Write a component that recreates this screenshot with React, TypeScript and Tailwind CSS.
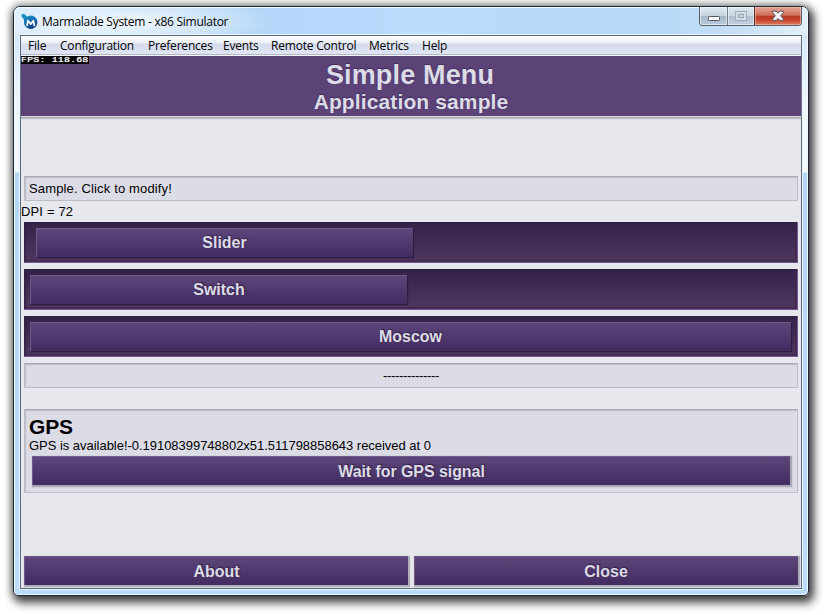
import type { ReactNode } from "react";

const menuItems = [
  { label: "File", width: "w-[32px]" },
  { label: "Configuration", width: "w-[88px]" },
  { label: "Preferences", width: "w-[75px]" },
  { label: "Events", width: "w-[48px]" },
  { label: "Remote Control", width: "w-[98px]" },
  { label: "Metrics", width: "w-[53px]" },
  { label: "Help", width: "w-[40px]" },
];

function Logo() {
  return (
    <svg width="18" height="18" viewBox="0 0 18 18" className="shrink-0">
      <defs>
        <linearGradient id="drop" x1="0" y1="0" x2="0.5" y2="1">
          <stop offset="0" stopColor="#18a9c4" />
          <stop offset="0.5" stopColor="#1679bb" />
          <stop offset="1" stopColor="#123f8c" />
        </linearGradient>
      </defs>
      <path
        d="M0.4 3.2C0.6 1.6 2.8 1.2 4 2.4C4.8 3.3 5.2 4.4 6.6 4.4C8.6 3.3 11.2 3.2 13.2 4.4C15.6 5.8 16.6 8.2 16.3 10.8C15.9 14.4 13.2 17 9.8 16.9C6 16.8 3.1 14.2 3 10.6C3 8.4 3.1 7.2 1.8 6.1C0.9 5.3 0.3 4.3 0.4 3.2Z"
        fill="url(#drop)"
      />
      <path d="M6 14L6.9 8.6L9.7 12.2L12.4 8.6L13.4 14" fill="none" stroke="#fff" strokeWidth="1.7" strokeLinejoin="round" />
    </svg>
  );
}

function WindowControls() {
  return (
    <div className="flex h-[19px] w-[103px] overflow-hidden rounded-b-[4px] border border-t-0 border-[#56626f]">
      <div className="flex w-[28px] items-center justify-center border-r border-[#6d7b8b] bg-[linear-gradient(#dfe9f3_0%,#c6d4e2_48%,#a5b6c9_50%,#b9cbdd_100%)] shadow-[inset_0_0_0_1px_rgba(255,255,255,0.55)]">
        <svg width="14" height="8" viewBox="0 0 14 8" className="mt-[5px] shrink-0">
          <rect x="1.5" y="1.5" width="11" height="4" rx="0.8" fill="#fff" stroke="#535666" />
        </svg>
      </div>
      <div className="flex w-[27px] items-center justify-center border-r border-[#5e2c28] bg-[linear-gradient(#dce7f2_0%,#cbd8e6_48%,#b0c0d1_50%,#c0d0e0_100%)] shadow-[inset_0_0_0_1px_rgba(255,255,255,0.5)]">
        <svg width="14" height="12" viewBox="0 0 14 12" className="shrink-0">
          <rect x="1.5" y="1.5" width="11" height="9" fill="#d4dee9" stroke="#a3acb8" />
          <rect x="4.5" y="4.5" width="5" height="3" fill="#c6d3e1" stroke="#98a3b1" />
        </svg>
      </div>
      <div className="flex flex-1 items-center justify-center bg-[linear-gradient(#e3a596_0%,#d0705c_46%,#b93a22_50%,#c7432a_72%,#dc8063_100%)] shadow-[inset_0_0_0_1px_rgba(255,200,185,0.5)]">
        <svg width="14" height="12" viewBox="0 0 14 12" className="shrink-0">
          <path
            d="M1.6 1.2H5.2L7 3.1L8.8 1.2H12.4V2.6L9.7 5.8L12.4 9V10.4H8.8L7 8.5L5.2 10.4H1.6V9L4.3 5.8L1.6 2.6Z"
            fill="#f5f5f5"
            stroke="#535666"
            strokeLinejoin="round"
          />
        </svg>
      </div>
    </div>
  );
}

const raised =
  "flex h-[29px] items-center justify-center border-l border-t border-[#74568f] bg-[linear-gradient(#5d467a,#412b60)] text-[16px] font-bold text-[#dcdce6] [text-shadow:1px_-1px_1px_#30204a]";

function Track({ children }: { children: ReactNode }) {
  return (
    <div className="mx-[3px] mb-[6px] h-[41px] shrink-0 border-b border-r border-[#755690] bg-[linear-gradient(#332248,#50375f)] pt-[6px] shadow-[inset_-2px_-2px_1px_rgba(60,38,75,0.6),inset_2px_1px_1px_rgba(45,28,65,0.6)]">
      {children}
    </div>
  );
}

const thumbShadow = "shadow-[1px_1px_1px_rgba(35,22,52,0.7)]";
const buttonShadow = "pt-[2px] shadow-[1px_1px_1px_1px_rgba(90,90,95,0.4)]";
const field =
  "mx-[3px] shrink-0 border border-[#bdbdc7] border-t-[#a9a9b3] bg-[#dcdce6] shadow-[inset_1px_1px_1px_#bcbcc6]";

export default function App() {
  return (
    <div className="h-[615px] w-[827px] overflow-hidden bg-white pl-[13px] pt-[6px] font-['Liberation_Sans',sans-serif]">
      <div className="flex h-[590px] w-[796px] flex-col rounded-t-[7px] rounded-b-[5px] border border-[#202a36] bg-[linear-gradient(#e3f0fc_0px,#d4e8fb_30px,#eef6fd_90px,#f4f9fe_165px,#b4d6f7_166px,#b9dcfd_100%)] px-[6px] shadow-[inset_0_0_0_1px_#f0f8ff,0_0_9px_1px_rgba(0,0,0,0.45),3px_5px_10px_2px_rgba(0,0,0,0.65)]">
        <div className="-mx-[6px] flex h-[28px] shrink-0 justify-between rounded-t-[6px] bg-[radial-gradient(ellipse_150px_24px_at_115px_15px,rgba(255,255,255,0.75),rgba(255,255,255,0)),linear-gradient(90deg,#dcecfb_0,#c3dff8_120px,#b4d6f8_250px,#badcfd_400px,#b7d9f9_640px,#c5def5_720px,#e1effb_100%)] pl-[7px] pr-[6px] shadow-[inset_0_1px_0_#f4faff,inset_1px_0_0_#f4faff,inset_-1px_0_0_#f4faff]">
          <div className="flex h-[28px] items-center">
            <Logo />
            <span className="ml-[3px] mt-px whitespace-nowrap font-['Open_Sans',sans-serif] text-[12px] tracking-[-0.27px] text-black">
              Marmalade System - x86 Simulator
            </span>
          </div>
          <WindowControls />
        </div>

        <div className="flex h-[554px] flex-col border border-[#5b6a7b] bg-[#e6e8ed] shadow-[0_0_0_1px_#eaf4fd]">
          <nav className="flex h-[20px] shrink-0 items-center border-b border-[#f5f5fa] bg-[linear-gradient(#ffffff_0px,#eaeef7_7px,#d5dbed_8px,#e0e5f4_18px,#b2b8c8_18px)] pl-[7px] font-['Open_Sans',sans-serif] text-[12px] tracking-[-0.2px] text-black">
            {menuItems.map((item) => (
              <span key={item.label} className={`${item.width} whitespace-nowrap`}>
                {item.label}
              </span>
            ))}
          </nav>

          <header className="relative flex h-[60px] shrink-0 flex-col items-center bg-[#5b4277] font-bold text-[#dcdce6] shadow-[0_1px_0_#d9d9df,0_2px_0_#acacb2,0_3px_1px_#c0c0c6] [text-shadow:0_-1px_1px_#402c5c]">
            <div className="absolute left-0 top-0 h-[8px] w-[68px] overflow-hidden bg-black">
              <span className="block origin-left scale-x-[1.25] whitespace-pre font-['Liberation_Mono',monospace] text-[8px] font-normal leading-[8px] tracking-[0.1px] text-white [text-shadow:0_0_1px_#fff]">
                FPS: 118.68
              </span>
            </div>
            <h1 className="mt-[3px] pr-[2px] text-[27px] leading-[32px] tracking-[0.15px]">Simple Menu</h1>
            <h2 className="text-[21px] leading-[22px] tracking-[0.12px]">Application sample</h2>
          </header>

          <main className="flex flex-1 flex-col pt-[60px]">
            <div className={`${field} flex h-[25px] items-center pl-[4px] text-[13px] tracking-[0.15px] text-black`}>
              Sample. Click to modify!
            </div>
            <p className="h-[21px] shrink-0 text-[13px] leading-[21px] tracking-[0.15px] text-black">DPI = 72</p>
            <Track>
              <div className={`${raised} ${thumbShadow} ml-[12px] w-[377px] pr-px`}>Slider</div>
            </Track>
            <Track>
              <div className={`${raised} ${thumbShadow} ml-[6px] w-[377px]`}>Switch</div>
            </Track>
            <Track>
              <div className={`${raised} ${thumbShadow} ml-[6px] w-[761px] pr-px`}>Moscow</div>
            </Track>
            <div className={`${field} flex h-[25px] items-center justify-center text-[13px] tracking-[-0.33px] text-black`}>
              --------------
            </div>
            <section className={`${field} mt-[21px] h-[84px] pl-[4px] text-black`}>
              <h3 className="mt-[5px] h-[23px] text-[21px] font-bold leading-[24px] tracking-[-0.2px]">GPS</h3>
              <p className="h-[18px] whitespace-nowrap text-[13px] leading-[16px] tracking-[-0.03px]">
                GPS is available!-0.19108399748802x51.511798858643 received at 0
              </p>
              <div className={`${raised} ${buttonShadow} ml-[3px] w-[758px] tracking-[-0.07px]`}>Wait for GPS signal</div>
            </section>
            <footer className="mt-[63px] flex gap-[6px] pl-[3px]">
              <div className={`${raised} ${buttonShadow} w-[384px]`}>About</div>
              <div className={`${raised} ${buttonShadow} w-[384px] pr-px`}>Close</div>
            </footer>
          </main>
        </div>
      </div>
    </div>
  );
}
